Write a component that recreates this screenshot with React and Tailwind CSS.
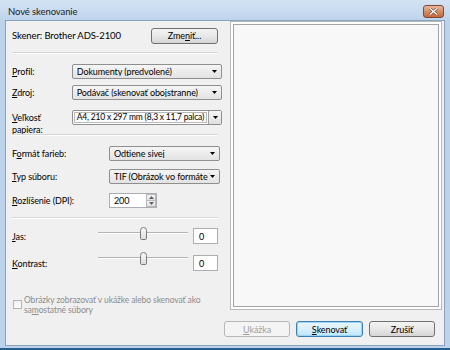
import React from 'react'

function U({ children }) {
  return <span className="underline decoration-1 underline-offset-[1px]">{children}</span>
}

function Caret({ color = '#000' }) {
  return (
    <svg width="5" height="3" viewBox="0 0 5 3" className="shrink-0">
      <path d="M0 0h5L2.5 3z" fill={color} />
    </svg>
  )
}

function Select({ value, className = '' }) {
  return (
    <div
      className={`flex h-[15px] items-center rounded-[2px] border border-[#8f8f8f] bg-linear-to-b from-[#f5f5f5] to-[#e3e3e3] pl-[4px] pr-[4px] ${className}`}
    >
      <span className="min-w-0 flex-1 overflow-hidden whitespace-nowrap leading-none">{value}</span>
      <Caret />
    </div>
  )
}

function Separator({ className = '' }) {
  return <div className={`h-[2px] border-t border-[#d5d5d5] border-b border-b-white ${className}`} />
}

function Slider({ className = '' }) {
  return (
    <div className={`relative h-[13px] w-[90px] ${className}`}>
      <div className="absolute left-0 right-0 top-[5px] h-[2px] border-t border-[#b3b3b3] border-b border-b-white" />
      <div className="absolute left-[42px] top-0 h-[13px] w-[7px] rounded-t-[4px] rounded-b-[2px] border border-[#7a7a7a] bg-linear-to-b from-[#fbfbfb] to-[#dcdcdc]" />
    </div>
  )
}

function Button({ children, variant = 'normal', className = '' }) {
  const styles = {
    normal: 'border-[#707070] from-[#f3f3f3] via-[#e8e8e8] to-[#d6d6d6] text-black',
    default: 'border-[#3c7fb1] from-[#eaf6fd] via-[#d9f0fc] to-[#bee6fd] text-black shadow-[inset_0_0_0_1px_#9dd5f6]',
    disabled: 'border-[#b5b8ba] from-[#f4f4f4] to-[#f4f4f4] text-[#a0a0a0]',
  }
  return (
    <div
      className={`flex h-[16px] items-center justify-center rounded-[3px] border bg-linear-to-b leading-none ${styles[variant]} ${className}`}
    >
      {children}
    </div>
  )
}

export default function App() {
  return (
    <div className="flex h-[350px] w-[450px] flex-col overflow-hidden border-b-2 border-[#2a5d8c] bg-[#bcd3eb] font-[Lato,'Segoe_UI',sans-serif] text-[9px] tracking-[-0.1px] text-black">
      {/* title bar */}
      <div className="flex h-[20px] shrink-0 items-start bg-linear-to-b from-[#d4e3f3] to-[#bed4ec] pl-[8px] pr-[6px]">
        <span className="mt-[7px] text-[9.5px] leading-none text-[#1b1b1b]">Nové skenovanie</span>
        <div className="ml-auto mt-[5px] flex h-[13px] w-[21px] items-center justify-center rounded-[3px] border border-[#7d4a3a] bg-linear-to-b from-[#e9b79c] via-[#d58d64] to-[#c4683f]">
          <svg width="9" height="7" viewBox="0 0 9 7">
            <path d="M1 0.5l7 6M8 0.5l-7 6" stroke="#5a3a30" strokeWidth="2.4" />
            <path d="M1 0.5l7 6M8 0.5l-7 6" stroke="#fff" strokeWidth="1.4" />
          </svg>
        </div>
      </div>

      {/* client area */}
      <div className="mx-[5px] mb-[2px] flex flex-1 border border-[#8aa3bd] bg-[#f0f0f0]">
        {/* left column */}
        <div className="flex w-[216px] shrink-0 flex-col pl-[6px]">
          <div className="mt-[7px] flex h-[15px] items-center">
            <span className="text-[9.5px] leading-none">Skener: Brother ADS-2100</span>
            <Button className="ml-auto mr-[4px] w-[67px]">
              Zme<U>n</U>iť...
            </Button>
          </div>

          <Separator className="mt-[9px] mr-[4px]" />

          <div className="mt-[10px] flex h-[15px] items-center">
            <span className="w-[60px] leading-none"><U>P</U>rofil:</span>
            <Select value="Dokumenty (predvolené)" className="w-[151px]" />
          </div>

          <div className="mt-[6px] flex h-[15px] items-center">
            <span className="w-[60px] leading-none"><U>Z</U>droj:</span>
            <Select value="Podávač (skenovať obojstranne)" className="w-[151px]" />
          </div>

          <div className="mt-[10px] flex h-[23px] items-start">
            <span className="mt-[2px] w-[60px] leading-[12px]">
              <U>V</U>eľkosť
              <br />
              papiera:
            </span>
            <div className="flex h-[15px] w-[151px] rounded-[2px] border border-[#8f8f8f] bg-white">
              <div className="m-[1px] flex min-w-0 flex-1 items-center overflow-hidden border border-[#b9b9b9] bg-[#fbfbfb] pl-[2px]">
                <span className="whitespace-nowrap text-[8.5px] tracking-[-0.2px] leading-none">A4, 210 x 297 mm (8,3 x 11,7 palca)</span>
              </div>
              <div className="flex w-[13px] shrink-0 items-center justify-center border-l border-[#a0a0a0] bg-linear-to-b from-[#f5f5f5] to-[#e0e0e0]">
                <Caret />
              </div>
            </div>
          </div>

          <Separator className="mt-[1px] mr-[4px]" />

          <div className="mt-[10px] flex h-[15px] items-center">
            <span className="w-[97px] leading-none">F<U>o</U>rmát farieb:</span>
            <Select value="Odtiene sivej" className="w-[111px]" />
          </div>

          <div className="mt-[8px] flex h-[15px] items-center">
            <span className="w-[97px] leading-none"><U>T</U>yp súboru:</span>
            <Select value="TIF (Obrázok vo formáte TIFF)" className="w-[111px]" />
          </div>

          <div className="mt-[9px] flex h-[15px] items-center">
            <span className="w-[97px] leading-none"><U>R</U>ozlíšenie (DPI):</span>
            <div className="flex h-[15px] w-[48px] border border-[#abadb3] bg-white">
              <span className="flex-1 self-center pl-[4px] leading-none">200</span>
              <div className="flex w-[10px] flex-col">
                <div className="flex flex-1 items-center justify-center border border-[#b8b8b8] bg-linear-to-b from-[#f6f6f6] to-[#e2e2e2]">
                  <svg width="5" height="3" viewBox="0 0 5 3"><path d="M0 3h5L2.5 0z" fill="#606060" /></svg>
                </div>
                <div className="flex flex-1 items-center justify-center border border-t-0 border-[#b8b8b8] bg-linear-to-b from-[#f6f6f6] to-[#e2e2e2]">
                  <Caret color="#606060" />
                </div>
              </div>
            </div>
          </div>

          <Separator className="mt-[9px] mr-[4px]" />

          <div className="mt-[9px] flex h-[16px] items-start">
            <span className="mt-[4px] w-[86px] leading-none"><U>J</U>as:</span>
            <Slider className="mt-[-1px]" />
            <div className="ml-[5px] flex h-[16px] w-[25px] items-center border border-[#abadb3] bg-white pl-[5px] leading-none">0</div>
          </div>

          <div className="mt-[11px] flex h-[16px] items-start">
            <span className="mt-[4px] w-[86px] leading-none"><U>K</U>ontrast:</span>
            <Slider className="mt-[-3px]" />
            <div className="ml-[5px] flex h-[16px] w-[25px] items-center border border-[#abadb3] bg-white pl-[5px] leading-none">0</div>
          </div>

          <div className="mt-[24px] flex items-start">
            <div className="mt-[5px] ml-[1px] h-[9px] w-[9px] shrink-0 border border-[#b4b4b4] bg-linear-to-b from-[#f2f2f2] to-[#fbfbfb]" />
            <span className="ml-[2px] whitespace-nowrap text-[8.5px] leading-[10px] text-[#8d8d8d]">
              Obrázky zobrazovať v ukážke alebo skenovať ako
              <br />
              sa<U>m</U>ostatné súbory
            </span>
          </div>
        </div>

        {/* right column */}
        <div className="flex flex-1 flex-col">
          <div className="ml-[8px] mr-[2px] h-[289px] border border-[#b8b8b8] bg-white p-[2px]">
            <div className="h-full border border-[#a4a4a4] bg-[#f8f8f8]" />
          </div>
          <div className="mt-[11px] flex justify-end gap-[6px] pr-[9px]">
            <Button variant="disabled" className="w-[66px]">
              <U>U</U>kážka
            </Button>
            <Button variant="default" className="w-[67px]">
              <U>S</U>kenovať
            </Button>
            <Button className="w-[66px]">Zrušiť</Button>
          </div>
        </div>
      </div>
    </div>
  )
}
